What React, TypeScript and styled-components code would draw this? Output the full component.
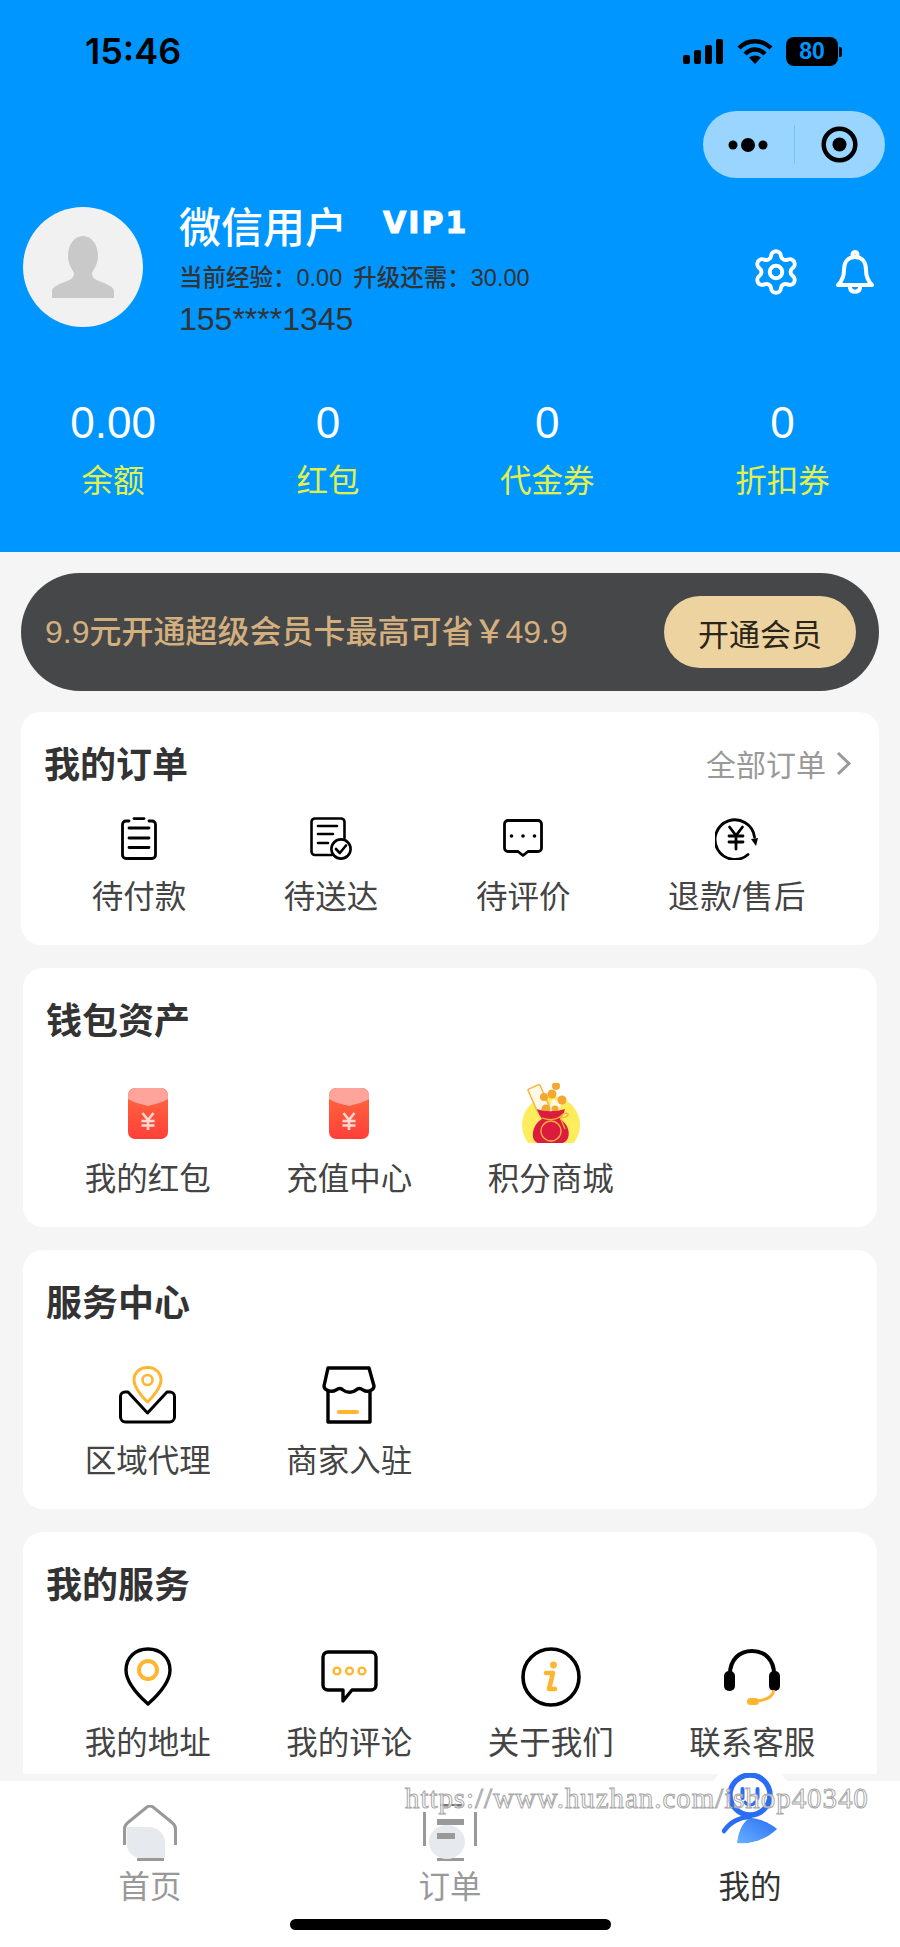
import React from 'react';
import styled, { createGlobalStyle } from 'styled-components';
import { Settings } from 'lucide-react';

const GlobalStyle = createGlobalStyle`
  html, body {
    margin: 0;
    padding: 0;
    background: #f5f5f5;
    font-family: "Liberation Sans", "Noto Sans CJK SC", sans-serif;
  }
`;

const colors = {
  blue: '#0096ff',
  page: '#f5f5f5',
  text: '#333333',
  label: '#444444',
  muted: '#999999',
  accent: '#ffb52e',
};

const Page = styled.div`
  position: relative;
  width: 900px;
  height: 1947px;
  display: flex;
  flex-direction: column;
  overflow: hidden;
  background: ${colors.page};
`;

const Main = styled.main`
  flex: 1;
  min-height: 0;
  overflow: hidden;
`;

/* header */

const Header = styled.header`
  height: 552px;
  background: ${colors.blue};
  display: flex;
  flex-direction: column;
`;

const StatusBar = styled.div`
  height: 111px;
  padding: 31px 62px 0 85px;
  box-sizing: border-box;
  display: flex;
  justify-content: space-between;
  align-items: flex-start;
`;

const Clock = styled.span`
  font-family: Inter, "Liberation Sans", sans-serif;
  font-size: 36px;
  line-height: 40px;
  font-weight: 600;
  color: #000;
`;

const StatusIcons = styled.div`
  display: flex;
  align-items: center;
  gap: 13px;
  height: 40px;
`;

const Battery = styled.div`
  position: relative;
  width: 52px;
  height: 29px;
  border-radius: 8px;
  background: #000;
  color: ${colors.blue};
  font-size: 23px;
  font-weight: 700;
  line-height: 29px;
  text-align: center;

  &::after {
    content: '';
    position: absolute;
    right: -4px;
    top: 10px;
    width: 3px;
    height: 10px;
    border-radius: 0 2px 2px 0;
    background: #000;
  }
`;

const CapsuleRow = styled.div`
  display: flex;
  justify-content: flex-end;
  padding-right: 15px;
`;

const Capsule = styled.div`
  width: 182px;
  height: 67px;
  border-radius: 34px;
  background: #99d5ff;
  display: grid;
  grid-template-columns: 1fr 1px 1fr;
  align-items: center;
  justify-items: center;
`;

const CapsuleDivider = styled.div`
  width: 1px;
  height: 39px;
  background: #7dc3f2;
`;

const Profile = styled.section`
  display: flex;
  align-items: flex-start;
  margin-top: 29px;
  padding: 0 26px 0 23px;
`;

const Avatar = styled.div`
  width: 120px;
  height: 120px;
  border-radius: 50%;
  background: #f1f1f1;
  display: flex;
  align-items: center;
  justify-content: center;
  flex-shrink: 0;
`;

const ProfileInfo = styled.div`
  flex: 1;
  margin-left: 36px;
  display: flex;
  flex-direction: column;
`;

const NameRow = styled.div`
  display: flex;
  align-items: flex-start;
  height: 50px;
`;

const UserName = styled.span`
  font-size: 42px;
  line-height: 44px;
  color: #fff;
  font-weight: 500;
`;

const VipTag = styled.span`
  margin-left: 36px;
  font-family: "DejaVu Sans", sans-serif;
  font-size: 30px;
  line-height: 32px;
  font-weight: 700;
  letter-spacing: 2px;
  color: #fff;
  -webkit-text-stroke: 1px #fff;
`;

const Experience = styled.div`
  margin-top: 5px;
  display: flex;
  gap: 11px;
  font-size: 23.5px;
  line-height: 32px;
  font-weight: 500;
  color: ${colors.text};
`;

const Phone = styled.div`
  margin-top: 7px;
  font-size: 32px;
  line-height: 36px;
  color: ${colors.text};
`;

const ProfileActions = styled.div`
  display: flex;
  align-items: center;
  gap: 35px;
  margin-top: 40px;
`;

const Stats = styled.section`
  display: flex;
  justify-content: space-around;
  margin-top: 61px;
`;

const Stat = styled.div`
  display: flex;
  flex-direction: column;
  align-items: center;
`;

const StatValue = styled.span`
  font-size: 44px;
  line-height: 50px;
  color: #fff;
`;

const StatLabel = styled.span`
  margin-top: 13px;
  font-size: 31.5px;
  line-height: 40px;
  color: #e2f04c;
`;

/* vip banner */

const VipBanner = styled.section`
  height: 118px;
  margin: 21px;
  padding: 0 23px 0 24px;
  border-radius: 59px;
  background: #464749;
  display: flex;
  align-items: center;
  justify-content: space-between;
`;

const VipText = styled.span`
  font-size: 32px;
  line-height: 40px;
  font-weight: 500;
  color: #d4b07e;
`;

const VipButton = styled.button`
  width: 192px;
  height: 72px;
  border: none;
  border-radius: 36px;
  background: #edd3a0;
  color: #2b2519;
  font: inherit;
  font-size: 31px;
  padding: 0;
`;

/* cards */

const Card = styled.section`
  margin: 0 23px 23px;
  padding: 32px 24px 28px;
  background: #fff;
  border-radius: 20px;
`;

const OrderCard = styled(Card)`
  margin: 0 21px 23px;
  padding: 32px 27px 28px 24px;
`;

const CardHead = styled.div`
  display: flex;
  align-items: center;
  justify-content: space-between;
  height: 44px;
`;

const CardTitle = styled.h2`
  margin: 0 0 0 -1px;
  font-size: 36px;
  line-height: 44px;
  font-weight: 700;
  color: ${colors.text};
`;

const MoreLink = styled.div`
  display: flex;
  align-items: center;
  gap: 10px;
  margin-bottom: 6px;
  font-size: 30px;
  color: ${colors.muted};
`;

const OrderRow = styled.div`
  display: flex;
  justify-content: space-around;
  margin-top: 28px;
  margin-left: -2px;
  margin-right: -3px;
`;

const ServiceGrid = styled.div`
  display: grid;
  grid-template-columns: repeat(4, 1fr);
  margin-top: 39px;
`;

const Entry = styled.div`
  display: flex;
  flex-direction: column;
  align-items: center;
`;

const IconSlot = styled.div<{ $height: number }>`
  height: ${(p) => p.$height}px;
  display: flex;
  align-items: center;
  justify-content: center;
`;

const EntryLabel = styled.span<{ $gap: number; $tracking?: number }>`
  margin-top: ${(p) => p.$gap}px;
  font-size: 31.5px;
  line-height: 40px;
  letter-spacing: ${(p) => p.$tracking ?? 0}px;
  color: ${colors.label};
  white-space: nowrap;
`;

/* tab bar */

const TabBar = styled.nav`
  position: relative;
  height: 173px;
  box-sizing: border-box;
  border-top: 7px solid ${colors.page};
  background: #fff;
  display: grid;
  grid-template-columns: repeat(3, 1fr);
`;

const TabBump = styled.div`
  position: absolute;
  left: 713px;
  top: -7px;
  width: 74px;
  height: 7px;
  background: #fff;
  clip-path: polygon(8% 0, 92% 0, 100% 100%, 0 100%);
`;

const Tab = styled.div`
  display: flex;
  flex-direction: column;
  align-items: center;
`;

const TabIcon = styled.div`
  height: 80px;
  display: flex;
  align-items: flex-end;
`;

const RaisedTabIcon = styled(TabIcon)`
  position: relative;
  margin-top: -8px;
  height: 88px;
  align-items: flex-start;
  z-index: 1;
`;

const TabLabel = styled.span<{ $active?: boolean }>`
  margin-top: 6px;
  font-size: 31.5px;
  line-height: 40px;
  color: ${(p) => (p.$active ? colors.text : colors.muted)};
`;

const HomeIndicator = styled.div`
  position: absolute;
  left: 290px;
  bottom: 17px;
  width: 321px;
  height: 11px;
  border-radius: 6px;
  background: #000;
`;

const Watermark = styled.div`
  position: absolute;
  left: 405px;
  top: 1781px;
  font-family: "Liberation Serif", serif;
  font-size: 29px;
  line-height: 34px;
  letter-spacing: 0.93px;
  white-space: nowrap;
  color: rgba(255, 255, 255, 0.75);
  -webkit-text-stroke: 1px #a8a8a8;
  z-index: 2;
`;

/* status icons */

const SignalIcon = () => (
  <svg width="41" height="25" viewBox="0 0 41 25">
    <rect x="0" y="16" width="7" height="9" rx="2" />
    <rect x="11" y="11" width="7" height="14" rx="2" />
    <rect x="22" y="6" width="7" height="19" rx="2" />
    <rect x="33" y="0" width="7" height="25" rx="2" />
  </svg>
);

const WifiIcon = () => (
  <svg width="36" height="27" viewBox="0 0 36 27" fill="none" stroke="#000" strokeWidth="4.4">
    <path d="M2 10 C11 1 25 1 34 10" />
    <path d="M8 16 C14 10 22 10 28 16" />
    <path d="M18 26 L12 19.5 C15.5 16.8 20.5 16.8 24 19.5 Z" fill="#000" stroke="none" />
  </svg>
);

const DotsIcon = () => (
  <svg width="40" height="16" viewBox="0 0 40 16">
    <circle cx="5" cy="8" r="4.5" />
    <circle cx="20" cy="8" r="7" />
    <circle cx="35" cy="8" r="4.5" />
  </svg>
);

const TargetIcon = () => (
  <svg width="37" height="37" viewBox="0 0 37 37" fill="none">
    <circle cx="18.5" cy="18.5" r="15.8" stroke="#000" strokeWidth="4.5" />
    <circle cx="18.5" cy="18.5" r="7" fill="#000" />
  </svg>
);

const AvatarFigure = () => (
  <svg width="64" height="62" viewBox="0 0 64 62" fill="#c9c9c9">
    <path d="M32 0 C41 0 47 9 47 20 C47 28 43 33 41 37 C41 41 43 43 48 45 C56 48 63 51 63 55 V62 H1 V55 C1 51 8 48 16 45 C21 43 23 41 23 37 C21 33 17 28 17 20 C17 9 23 0 32 0 Z" />
  </svg>
);

const BellIcon = () => (
  <svg width="38" height="44" viewBox="0 0 38 44" fill="none" stroke="#fff" strokeWidth="4" strokeLinejoin="round">
    <circle cx="19" cy="4.5" r="2.5" />
    <path d="M19 7 C11 7 8 13 8 20 C8 27 6 31 2 35 H36 C32 31 30 27 30 20 C30 13 27 7 19 7 Z" />
    <path d="M14 38 C15 43 23 43 24 38" strokeLinecap="round" />
  </svg>
);

/* order icons */

const ClipboardIcon = () => (
  <svg width="36" height="43" viewBox="0 0 36 43" fill="none" stroke="#000" strokeWidth="2.8" strokeLinecap="round">
    <path d="M8 4 H5 A3.5 3.5 0 0 0 1.5 7.5 V38 A3.5 3.5 0 0 0 5 41.5 H31 A3.5 3.5 0 0 0 34.5 38 V7.5 A3.5 3.5 0 0 0 31 4 H28" />
    <path d="M13 1.6 H23" />
    <path d="M8 11 H28 M8 21 H28 M8 30.5 H28" />
  </svg>
);

const DocCheckIcon = () => (
  <svg width="42" height="43" viewBox="0 0 42 43" fill="none" stroke="#000" strokeWidth="2.6" strokeLinecap="round" strokeLinejoin="round">
    <path d="M22 38 H5 A3.5 3.5 0 0 1 1.5 34.5 V5 A3.5 3.5 0 0 1 5 1.5 H31 A3.5 3.5 0 0 1 34.5 5 V21" />
    <path d="M8 9 H27 M8 17 H23 M8 26 H18" />
    <circle cx="31" cy="32" r="9.6" />
    <path d="M26 32 L29.8 36 L36 28.5" />
  </svg>
);

const BubbleIcon = () => (
  <svg width="40" height="38" viewBox="0 0 40 38" fill="none" stroke="#000" strokeWidth="2.8" strokeLinejoin="round">
    <path d="M5 1.5 H35 A3.5 3.5 0 0 1 38.5 5 V29 A3.5 3.5 0 0 1 35 32.5 H25 L20 36.5 L15 32.5 H5 A3.5 3.5 0 0 1 1.5 29 V5 A3.5 3.5 0 0 1 5 1.5 Z" />
    <circle cx="8.5" cy="17" r="1.8" fill="#000" stroke="none" />
    <circle cx="20" cy="17" r="1.8" fill="#000" stroke="none" />
    <circle cx="31.5" cy="17" r="1.8" fill="#000" stroke="none" />
  </svg>
);

const RefundIcon = () => (
  <svg width="44" height="44" viewBox="0 0 44 44" fill="none" stroke="#000" strokeWidth="2.8" strokeLinecap="round">
    <path d="M39.5 21 A19.8 19.8 0 1 0 33 38.5" />
    <path d="M36 23 L43 22 L41 30 Z" fill="#000" stroke="none" />
    <path d="M14.5 11 L21 19.5 L27.5 11 M14 20 H28 M14 26 H28 M21 19.5 V33" />
  </svg>
);

/* wallet icons */

const RedPacketIcon = ({ id }: { id: string }) => (
  <svg width="40" height="51" viewBox="0 0 40 51">
    <defs>
      <linearGradient id={id} x1="0" y1="0" x2="0" y2="1">
        <stop offset="0" stopColor="#ff6b3f" />
        <stop offset="1" stopColor="#ff3f3a" />
      </linearGradient>
    </defs>
    <rect width="40" height="51" rx="7" fill={`url(#${id})`} />
    <path d="M0 8 A8 8 0 0 1 8 0 H32 A8 8 0 0 1 40 8 V11 C36 14 27 16 20 18 C13 16 4 14 0 11 Z" fill="#ffa49b" />
    <path d="M14.5 25 L20 32 L25.5 25 M13.5 33 H26.5 M13.5 37.5 H26.5 M20 32 V42" fill="none" stroke="#ffd9d2" strokeWidth="2.6" />
  </svg>
);

const BagIcon = () => (
  <svg width="58" height="60" viewBox="0 0 58 60">
    <defs>
      <clipPath id="bagClip">
        <rect width="58" height="60" />
      </clipPath>
    </defs>
    <g clipPath="url(#bagClip)">
      <circle cx="29" cy="42" r="29" fill="#fdec5b" />
      <rect x="10" y="3" width="13" height="25" rx="1" transform="rotate(-24 16 15)" fill="#fff8e6" stroke="#f5b63b" strokeWidth="1.4" />
      <rect x="27" y="17" width="10" height="18" rx="1" transform="rotate(20 32 26)" fill="#fff8e6" />
      <circle cx="22" cy="14" r="4" fill="#f2a634" />
      <circle cx="30" cy="11" r="4.5" fill="#f4a82e" />
      <circle cx="34" cy="3" r="4" fill="#f4a82e" />
      <circle cx="40" cy="17" r="4.5" fill="#f2a634" />
      <circle cx="24" cy="26" r="4.5" fill="#f2a634" />
      <circle cx="33" cy="26" r="3.5" fill="#f4a82e" />
      <path d="M15 26 C22 29 34 29 43 26 C42 31 39 34 38 36 C46 41 48 49 46 55 C44 60 38 62 29 62 C18 62 12 60 11 54 C10 47 14 39 20 36 C18 33 16 30 15 26 Z" fill="#dc1c3f" />
      <circle cx="29" cy="48" r="10" fill="none" stroke="#f2b13a" strokeWidth="1.3" />
      <path d="M20 35 C26 37 33 37 38 34 M38 34 C40 31 44 29 46 31 C46 34 42 35 38 34 L43 46" fill="none" stroke="#f2b13a" strokeWidth="1.3" />
    </g>
  </svg>
);

/* service centre icons */

const PinInboxIcon = () => (
  <svg width="57" height="58" viewBox="0 0 57 58" fill="none" strokeLinejoin="round">
    <path d="M9 26 H6 A4.5 4.5 0 0 0 1.5 30.5 V51 A5 5 0 0 0 6.5 56 H50.5 A5 5 0 0 0 55.5 51 V30.5 A4.5 4.5 0 0 0 51 26 H48 L28.5 47 Z" stroke="#000" strokeWidth="3" />
    <path d="M28.5 1.5 C20 1.5 15 7.5 15 14 C15 21 23 31 28.5 36 C34 31 42 21 42 14 C42 7.5 37 1.5 28.5 1.5 Z" fill="#fff" stroke={colors.accent} strokeWidth="3" />
    <circle cx="28.5" cy="14" r="5" stroke={colors.accent} strokeWidth="2.6" />
  </svg>
);

const StoreIcon = () => (
  <svg width="54" height="58" viewBox="0 0 54 58" fill="none" stroke="#000" strokeWidth="3.4" strokeLinejoin="round">
    <path d="M6 25 V56 H48 V25" />
    <path d="M6 2 H47 L52 20 C52 24 46 27 41 24 C38 21.5 36 22 34 24 C31 27 25 27 21 24 C19 22 17 22 14 24 C9 27 2 24 2 20 Z" />
    <path d="M17 46 H35" stroke={colors.accent} strokeWidth="4" strokeLinecap="round" />
  </svg>
);

/* my service icons */

const MapPinIcon = () => (
  <svg width="48" height="60" viewBox="0 0 48 60" fill="none">
    <path d="M24 2 C11 2 2 11 2 23 C2 36 15 49 24 57 C33 49 46 36 46 23 C46 11 37 2 24 2 Z" stroke="#000" strokeWidth="3.4" strokeLinejoin="round" />
    <circle cx="24" cy="23" r="9" stroke={colors.accent} strokeWidth="4" />
  </svg>
);

const CommentIcon = () => (
  <svg width="57" height="54" viewBox="0 0 57 54" fill="none">
    <path d="M7 2 H50 A5 5 0 0 1 55 7 V35 A5 5 0 0 1 50 40 H31 L22 51 V40 H7 A5 5 0 0 1 2 35 V7 A5 5 0 0 1 7 2 Z" stroke="#000" strokeWidth="3.4" strokeLinejoin="round" />
    <circle cx="16" cy="21" r="3.4" stroke={colors.accent} strokeWidth="2.4" />
    <circle cx="28.5" cy="21" r="3.4" stroke={colors.accent} strokeWidth="2.4" />
    <circle cx="41" cy="21" r="3.4" stroke={colors.accent} strokeWidth="2.4" />
  </svg>
);

const InfoIcon = () => (
  <svg width="60" height="60" viewBox="0 0 60 60" fill="none">
    <circle cx="30" cy="30" r="28" stroke="#000" strokeWidth="3.6" />
    <circle cx="32.5" cy="18" r="3.4" fill={colors.accent} />
    <path d="M25 26 H32 L28 42 H34" stroke={colors.accent} strokeWidth="4.6" strokeLinecap="round" strokeLinejoin="round" />
  </svg>
);

const HeadsetIcon = () => (
  <svg width="58" height="58" viewBox="0 0 58 58" fill="none">
    <path d="M7 26 C7 12 16 3 29 3 C42 3 51 12 51 26" stroke="#000" strokeWidth="4" />
    <rect x="1" y="23" width="11" height="20" rx="5" fill="#000" />
    <rect x="46" y="23" width="11" height="20" rx="5" fill="#000" />
    <path d="M51 42 C50 49 44 52 34 53" stroke={colors.accent} strokeWidth="3" />
    <rect x="24" y="50" width="12" height="7" rx="3.5" fill={colors.accent} />
  </svg>
);

/* tab icons: the outline is broken at the corners, the pale blob sits over it */

const HomeTabIcon = () => (
  <svg width="54" height="56" viewBox="0 0 54 56" fill="none">
    <path d="M1.5 40 V24 C1.5 21 3 19 5 17.5 L24 2 C26 0.8 28 0.8 30 2 L49 17.5 C51 19 52.5 21 52.5 24 V40" stroke="#999" strokeWidth="3" />
    <path d="M14 54.5 H41" stroke="#999" strokeWidth="3" />
    <path d="M3.5 22 H25 C36 22 42 30 42 38 V53 H15 C8 51 3.5 45 3.5 38 Z" fill="#e6e9ee" />
  </svg>
);

const OrderTabIcon = () => (
  <svg width="54" height="57" viewBox="0 0 54 57" fill="none">
    <path d="M1.5 8 V42 M52.5 8 V42" stroke="#999" strokeWidth="3" />
    <path d="M17 1 H41" stroke="#777" strokeWidth="2" />
    <path d="M14 55.5 H41" stroke="#999" strokeWidth="3" />
    <ellipse cx="24" cy="38" rx="18" ry="17" fill="#e6e9ee" />
    <rect x="14" y="15" width="27" height="6" fill="#999" />
    <rect x="14" y="29" width="18" height="6" fill="#999" />
  </svg>
);

const MeTabIcon = () => (
  <svg width="56" height="72" viewBox="0 0 56 72" fill="none">
    <defs>
      <linearGradient id="meBody" x1="0" y1="1" x2="1" y2="0">
        <stop offset="0" stopColor="#66b1ff" />
        <stop offset="1" stopColor="#2a6df4" />
      </linearGradient>
    </defs>
    <circle cx="28" cy="22" r="20" stroke="#2a6df4" strokeWidth="5.4" />
    <path d="M20.5 16 V25 M35.5 16 V25" stroke="#2a6df4" strokeWidth="4" strokeLinecap="round" />
    <path d="M23 29 C25 33 31 33 33 29" stroke="#2a6df4" strokeWidth="3" strokeLinecap="round" />
    <path d="M2 58 C8 49 18 44 28 44" stroke="#2a6df4" strokeWidth="4.6" strokeLinecap="round" />
    <path d="M15 70 C17 56 22 46 30 45 C39 46 50 51 55 56 C46 65 30 72 15 70 Z" fill="url(#meBody)" />
  </svg>
);

const orderEntries = [
  { label: '待付款', icon: <ClipboardIcon /> },
  { label: '待送达', icon: <DocCheckIcon /> },
  { label: '待评价', icon: <BubbleIcon /> },
  { label: '退款/售后', icon: <RefundIcon />, tracking: 0.7 },
];

const sections = [
  {
    title: '钱包资产',
    entries: [
      { label: '我的红包', icon: <RedPacketIcon id="packetA" /> },
      { label: '充值中心', icon: <RedPacketIcon id="packetB" /> },
      { label: '积分商城', icon: <BagIcon /> },
    ],
  },
  {
    title: '服务中心',
    entries: [
      { label: '区域代理', icon: <PinInboxIcon /> },
      { label: '商家入驻', icon: <StoreIcon /> },
    ],
  },
  {
    title: '我的服务',
    entries: [
      { label: '我的地址', icon: <MapPinIcon /> },
      { label: '我的评论', icon: <CommentIcon /> },
      { label: '关于我们', icon: <InfoIcon /> },
      { label: '联系客服', icon: <HeadsetIcon /> },
    ],
  },
];

const stats = [
  { value: '0.00', label: '余额' },
  { value: '0', label: '红包' },
  { value: '0', label: '代金券' },
  { value: '0', label: '折扣券' },
];

export default function App() {
  return (
    <Page>
      <GlobalStyle />
      <Main>
        <Header>
          <StatusBar>
            <Clock>15:46</Clock>
            <StatusIcons>
              <SignalIcon />
              <WifiIcon />
              <Battery>80</Battery>
            </StatusIcons>
          </StatusBar>
          <CapsuleRow>
            <Capsule>
              <DotsIcon />
              <CapsuleDivider />
              <TargetIcon />
            </Capsule>
          </CapsuleRow>
          <Profile>
            <Avatar>
              <AvatarFigure />
            </Avatar>
            <ProfileInfo>
              <NameRow>
                <UserName>微信用户</UserName>
                <VipTag>VIP1</VipTag>
              </NameRow>
              <Experience>
                <span>当前经验：0.00</span>
                <span>升级还需：30.00</span>
              </Experience>
              <Phone>155****1345</Phone>
            </ProfileInfo>
            <ProfileActions>
              <Settings size={50} color="#fff" strokeWidth={1.9} />
              <BellIcon />
            </ProfileActions>
          </Profile>
          <Stats>
            {stats.map((stat) => (
              <Stat key={stat.label}>
                <StatValue>{stat.value}</StatValue>
                <StatLabel>{stat.label}</StatLabel>
              </Stat>
            ))}
          </Stats>
        </Header>

        <VipBanner>
          <VipText>9.9元开通超级会员卡最高可省￥49.9</VipText>
          <VipButton>开通会员</VipButton>
        </VipBanner>

        <OrderCard>
          <CardHead>
            <CardTitle>我的订单</CardTitle>
            <MoreLink>
              全部订单
              <svg width="16" height="25" viewBox="0 0 16 25" fill="none" stroke="#999" strokeWidth="3">
                <path d="M2 2 L13 12.5 L2 23" />
              </svg>
            </MoreLink>
          </CardHead>
          <OrderRow>
            {orderEntries.map((entry) => (
              <Entry key={entry.label}>
                <IconSlot $height={44}>{entry.icon}</IconSlot>
                <EntryLabel $gap={17} $tracking={entry.tracking}>
                  {entry.label}
                </EntryLabel>
              </Entry>
            ))}
          </OrderRow>
        </OrderCard>

        {sections.map((section) => (
          <Card key={section.title}>
            <CardHead>
              <CardTitle>{section.title}</CardTitle>
            </CardHead>
            <ServiceGrid>
              {section.entries.map((entry) => (
                <Entry key={entry.label}>
                  <IconSlot $height={60}>{entry.icon}</IconSlot>
                  <EntryLabel $gap={16}>{entry.label}</EntryLabel>
                </Entry>
              ))}
            </ServiceGrid>
          </Card>
        ))}
      </Main>

      <TabBar>
        <TabBump />
        <Tab>
          <TabIcon>
            <HomeTabIcon />
          </TabIcon>
          <TabLabel>首页</TabLabel>
        </Tab>
        <Tab>
          <TabIcon>
            <OrderTabIcon />
          </TabIcon>
          <TabLabel>订单</TabLabel>
        </Tab>
        <Tab>
          <RaisedTabIcon>
            <MeTabIcon />
          </RaisedTabIcon>
          <TabLabel $active>我的</TabLabel>
        </Tab>
        <HomeIndicator />
      </TabBar>
      <Watermark>https://www.huzhan.com/ishop40340</Watermark>
    </Page>
  );
}
